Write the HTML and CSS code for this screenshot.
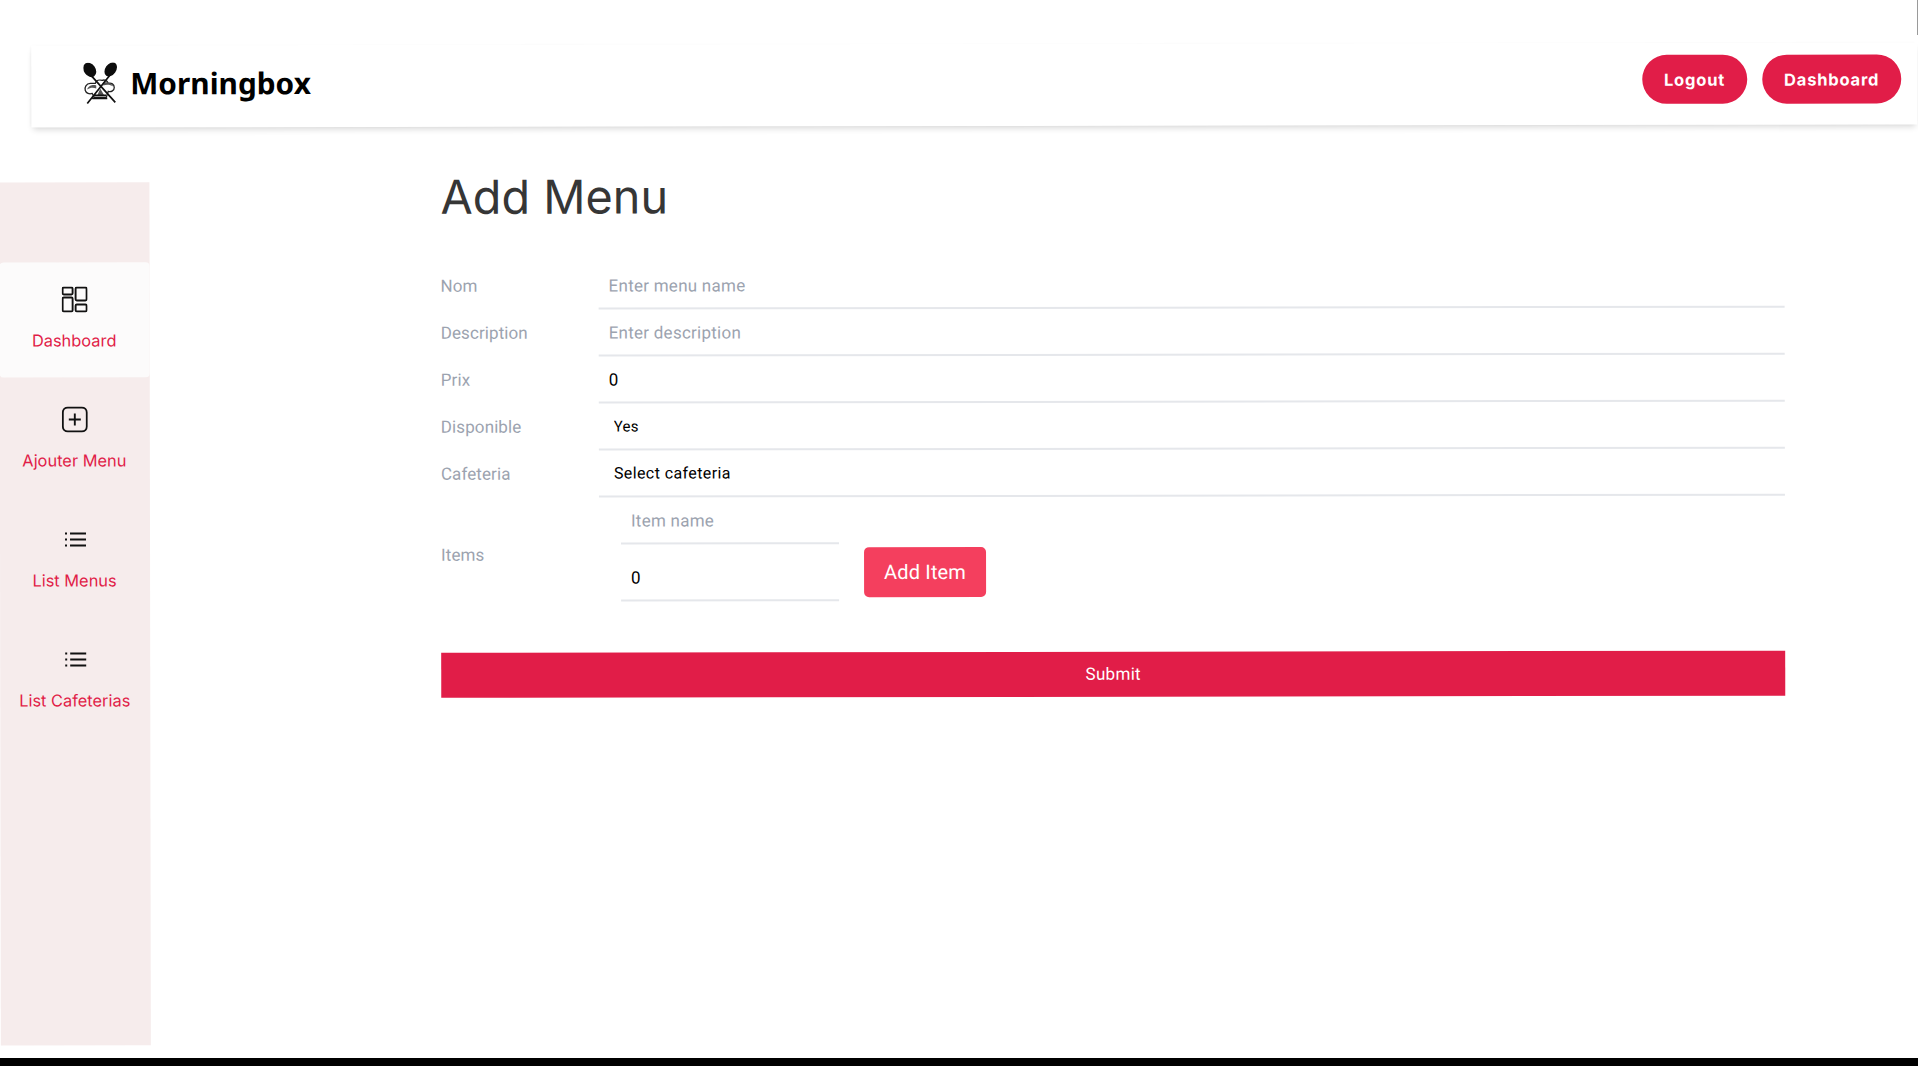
FILE: index.html
```html
<!DOCTYPE html>
<html lang="en">
<head>
<meta charset="utf-8">
<title>Morningbox</title>
<link rel="stylesheet" href="styles.css">
</head>
<body>
<div class="viewport">
  <div class="page">
    <header class="topbar">
      <a class="brand" href="#">
        <svg class="brand-logo" viewBox="0 0 34 42" aria-hidden="true">
          <path class="logo-hat" d="M7 21c-4 0-6 4-5 7 1 3 4 4 7 3l2 4h12l2-6c3 1 6-1 6-4 0-3-3-5-6-4-1-3-4-4-6-3-3-1-6 0-7 3-2 0-3 0-5 0z"/>
          <path class="logo-fill" d="M13 23c-3-1-8 0-9 4 3-2 6-2 9-1zM20 20c4-1 9 1 10 4-3-2-7-2-10-1zM14 33l3-7 4 7z"/>
          <path class="logo-stick" d="M28 11 L4 41M6 11 L32 40M10 33h13M9 36h15"/>
          <ellipse class="logo-spoon" cx="6.5" cy="7.5" rx="5.8" ry="7.8" transform="rotate(-35 6.5 7.5)"/>
          <ellipse class="logo-spoon" cx="27.5" cy="7" rx="5.4" ry="7.8" transform="rotate(35 27.5 7)"/>
        </svg>
        <span class="brand-name">Morningbox</span>
      </a>
      <nav class="top-actions">
        <button class="pill" type="button">Logout</button>
        <button class="pill" type="button">Dashboard</button>
      </nav>
    </header>

    <div class="body-row">
      <aside class="sidebar">
        <a class="side-item is-active" href="#">
          <svg class="side-icon" viewBox="0 0 26 26" aria-hidden="true">
            <rect x="1" y="1" width="10" height="7" rx="1.2"/>
            <rect x="1" y="11" width="10" height="14" rx="1.2"/>
            <rect x="14" y="1" width="11" height="13" rx="1.2"/>
            <rect x="14" y="18" width="11" height="7" rx="1.2"/>
          </svg>
          <span>Dashboard</span>
        </a>
        <a class="side-item" href="#">
          <svg class="side-icon" viewBox="0 0 26 26" aria-hidden="true">
            <rect x="1" y="1" width="24" height="24" rx="5"/>
            <path d="M13 7v12M7 13h12"/>
          </svg>
          <span>Ajouter Menu</span>
        </a>
        <a class="side-item" href="#">
          <svg class="side-icon" viewBox="0 0 26 26" aria-hidden="true">
            <path d="M8 7h16M8 13h16M8 19h16"/>
            <path class="dots" d="M3 6h2v2H3zM3 12h2v2H3zM3 18h2v2H3z"/>
          </svg>
          <span>List Menus</span>
        </a>
        <a class="side-item" href="#">
          <svg class="side-icon" viewBox="0 0 26 26" aria-hidden="true">
            <path d="M8 7h16M8 13h16M8 19h16"/>
            <path class="dots" d="M3 6h2v2H3zM3 12h2v2H3zM3 18h2v2H3z"/>
          </svg>
          <span>List Cafeterias</span>
        </a>
      </aside>

      <main class="content">
        <h1 class="title">Add Menu</h1>
        <form class="form">
          <div class="row">
            <label class="label" for="nom">Nom</label>
            <input class="field" id="nom" type="text" placeholder="Enter menu name">
          </div>
          <div class="row">
            <label class="label" for="desc">Description</label>
            <input class="field" id="desc" type="text" placeholder="Enter description">
          </div>
          <div class="row">
            <label class="label" for="prix">Prix</label>
            <input class="field" id="prix" type="text" value="0">
          </div>
          <div class="row">
            <label class="label" for="dispo">Disponible</label>
            <select class="field select select-small" id="dispo"><option>Yes</option><option>No</option></select>
          </div>
          <div class="row">
            <label class="label" for="caf">Cafeteria</label>
            <select class="field select" id="caf"><option>Select cafeteria</option></select>
          </div>
          <div class="row items-row">
            <span class="label items-label">Items</span>
            <div class="items">
              <div class="item-fields">
                <input class="field item-field" type="text" placeholder="Item name">
                <input class="field item-field" type="text" value="0">
              </div>
              <button class="add-item" type="button">Add Item</button>
            </div>
          </div>
          <button class="submit" type="submit">Submit</button>
        </form>
      </main>
    </div>
  </div>
</div>
<div class="edge-line"></div>
<div class="bottom-bar"></div>
</body>
</html>
```
FILE: styles.css
```css
* { box-sizing: border-box; }
html, body { margin: 0; height: 100%; }
body { background: #000; font-family: Inter, "Liberation Sans", sans-serif; overflow: hidden; }
a { text-decoration: none; color: inherit; }

.viewport { height: 1058px; background: #fff; overflow: hidden; }
.page { width: 1918px; height: 1058px; padding-top: 44px; transform: rotate(-0.095deg); transform-origin: 959px 533px; }
.bottom-bar { height: 8px; background: #000; }
.edge-line { position: absolute; top: 0; right: 0; width: 1px; height: 35px; background: #9a9a9a; }

.topbar {
  margin-left: 32px; height: 82px; background: #fff;
  box-shadow: 0 4px 6px -2px rgba(0,0,0,.16), -1px 0 3px -1px rgba(0,0,0,.06);
  display: flex; align-items: center; justify-content: space-between;
  padding: 0 16px 0 52px;
}
.brand { display: flex; align-items: center; gap: 13px; margin-top: -7px; }
.brand-logo { width: 34px; height: 42px; flex: none; }
.logo-hat { fill: #fff; stroke: #222; stroke-width: 1.3; }
.logo-fill { fill: #555; }
.logo-stick { fill: none; stroke: #111; stroke-width: 1.7; }
.logo-spoon { fill: #0d0d0d; }
.brand-name { font-family: "Noto Sans", sans-serif; font-weight: 700; font-size: 29.8px; line-height: 1; color: #000; }

.top-actions { display: flex; gap: 15px; margin-top: -9px; }
.pill {
  height: 49px; padding: 0 22px; border: 0; border-radius: 25px;
  background: #e11d48; color: #fff;
  font: 700 16.5px Inter, sans-serif; letter-spacing: .8px;
}

.body-row { display: flex; align-items: flex-start; }
.sidebar {
  width: 150px; height: 863px; margin-top: 55px; padding-top: 80px; background: #f6ecec;
  display: flex; flex-direction: column; gap: 5px; flex: none;
}
.side-item {
  height: 115px; padding-top: 24px; border-radius: 4px;
  display: flex; flex-direction: column; align-items: center; gap: 18px;
  color: #e11d48; font-size: 16.4px; line-height: 20px;
}
.side-item.is-active { background: #fcfbfb; }
.side-icon { width: 26px; height: 26px; fill: none; stroke: #111; stroke-width: 1.9; margin-left: -1px; }
.side-icon .dots { fill: #111; stroke: none; }
.side-item span { margin-left: -1px; }

.content { width: 1344px; margin-left: 291px; }
.title { margin: 41px 0 0; font-weight: 400; font-size: 46.8px; line-height: 58px; color: #363636; }
.form { display: block; margin-top: 37px; }
.row { display: flex; align-items: center; height: 47px; }
.label { width: 158px; flex: none; margin-top: -1px; color: #9ca3af; font: 400 17px Roboto, sans-serif; letter-spacing: .1px; }
.field {
  flex: 1; width: 100%; height: 47px; padding: 0 10px; border: 0; border-bottom: 2px solid #e5e7eb; background: transparent; outline: 0;
  color: #000; font: 400 17px Roboto, sans-serif; letter-spacing: .25px; border-radius: 0;
}
.field::placeholder { color: #9ca3af; opacity: 1; }
.select { appearance: none; padding-left: 15px; font-size: 16px; letter-spacing: .4px; }
.select-small { font-size: 15px; letter-spacing: .2px; }
.item-field { flex: none; }

.items-row { height: 105px; align-items: flex-start; }
.items-label { margin-top: 47px; }
.items { display: flex; align-items: flex-start; gap: 25px; margin-left: 22px; }
.item-fields { display: flex; flex-direction: column; width: 218px; gap: 10px; }
.add-item {
  margin-top: 50px; width: 122px; height: 50px; border: 0; border-radius: 5px; background: #f43f5e; color: #fff;
  font: 400 20px Roboto, sans-serif; letter-spacing: .15px;
}
.submit {
  display: block; width: 100%; height: 45px; margin-top: 50px; padding-bottom: 3px; border: 0; background: #e11d48; color: #fff;
  font: 400 17px Roboto, sans-serif; letter-spacing: .3px;
}
```
